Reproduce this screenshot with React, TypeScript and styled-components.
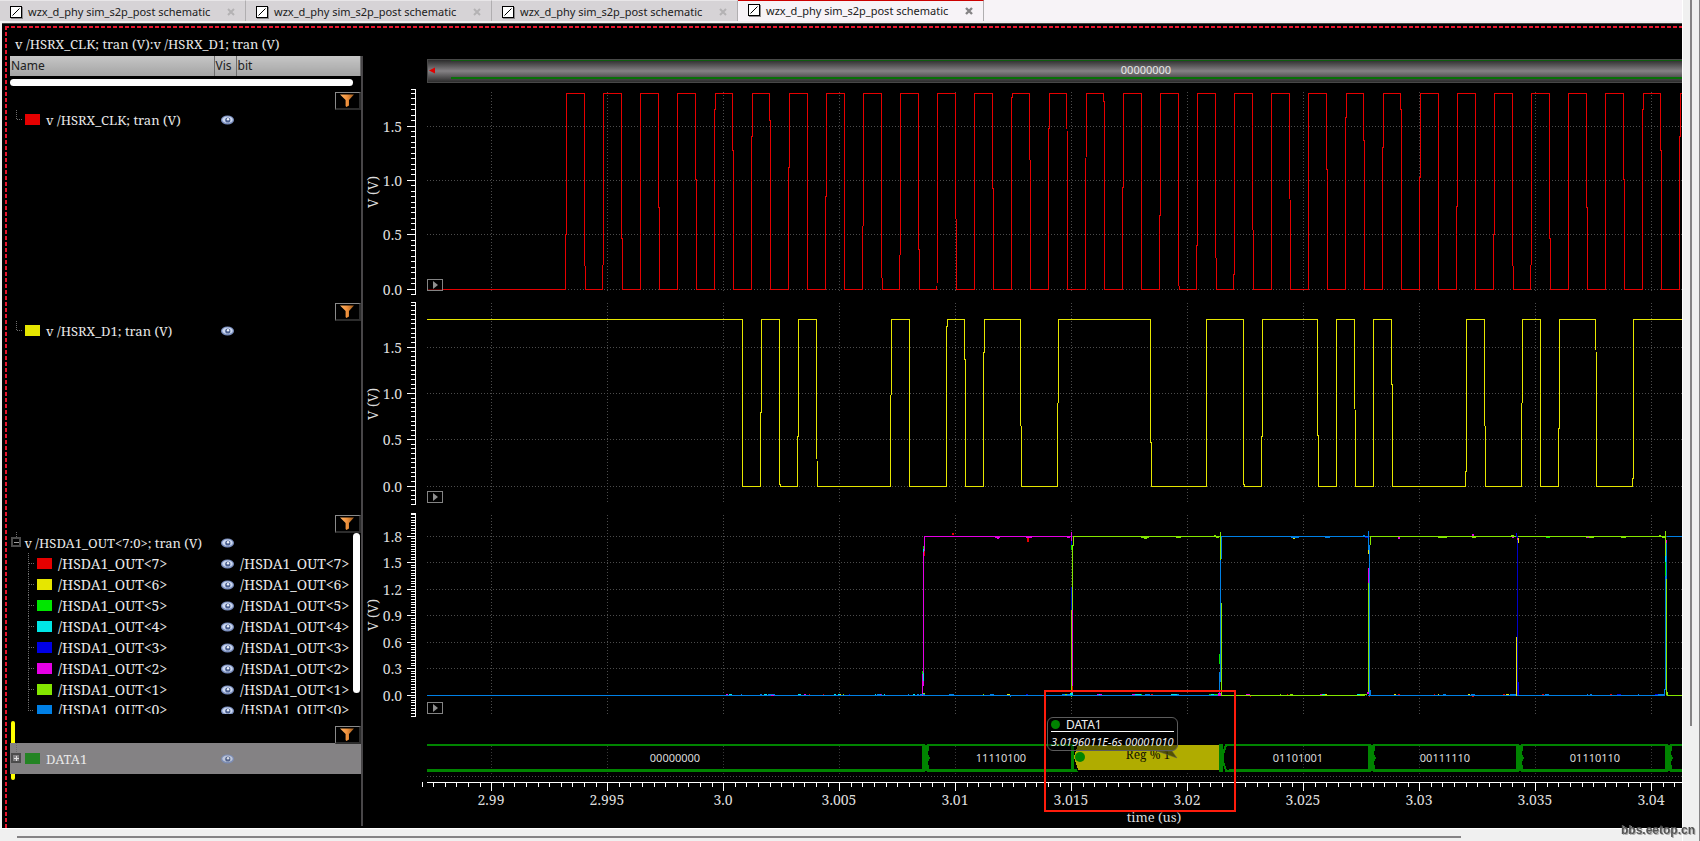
import React from "react";
import styled, { createGlobalStyle, css } from "styled-components";

const SERIF = '"Noto Serif", "Liberation Serif", serif';
const SANS = '"Noto Sans", "Open Sans", sans-serif';
const GUTTER = 64;
const PX_PER_5NS = 116;

const Global = createGlobalStyle`
  * { box-sizing: border-box; }
  body { margin: 0; background: #f0f0f0; }
  button { font: inherit; color: inherit; padding: 0; margin: 0; background: none; border: 0; }
`;

const Page = styled.div`
  display: grid;
  grid-template-columns: minmax(0, 1fr) 18px;
  min-height: 100vh;
  font-family: ${SANS};
  background: #f0f0f0;
`;

const Main = styled.div`
  display: flex;
  flex-direction: column;
  min-width: 0;
`;

const TabBar = styled.nav`
  display: flex;
  height: 21px;
  background: #f7f3f7;
`;

const Tab = styled.div<{ $active?: boolean }>`
  display: flex;
  align-items: center;
  width: 246px;
  padding: ${(p) => (p.$active ? "0 10px 1px 10px" : "2px 10px 0 10px")};
  border-top: 1px solid ${(p) => (p.$active ? "#cc0000" : "#e8e6e8")};
  border-right: 1px solid #b0aeb0;
  background: ${(p) => (p.$active ? "#f7f3f7" : "#d6d3d6")};
  svg { flex: none; }
`;

const TabLabel = styled.button`
  flex: 1;
  margin-left: 5px;
  text-align: left;
  white-space: nowrap;
  font-size: 11px;
  line-height: 16px;
  color: #202020;
`;

const IconButton = styled.button`
  display: flex;
`;

const Frame = styled.section`
  position: relative;
  flex: 1;
  display: flex;
  flex-direction: column;
  margin: 2px 0 0 2px;
  border-top: 1px solid #444;
  background: #000;
  color: #e8e8e8;
  padding: 6px 0 2px 8px;
  overflow: hidden;
  &::before {
    content: "";
    position: absolute;
    left: 3px;
    top: 2px;
    right: 0;
    height: 2px;
    background: repeating-linear-gradient(90deg, #e8142c 0 4px, transparent 4px 6px);
  }
  &::after {
    content: "";
    position: absolute;
    left: 3px;
    top: 2px;
    bottom: 0;
    width: 2px;
    background: repeating-linear-gradient(180deg, #e8142c 0 4px, transparent 4px 6px);
  }
`;

const Title = styled.h1`
  margin: 0;
  padding: 4px 5px 2px;
  font: 400 13px / 20px ${SERIF};
`;

const Body = styled.div`
  flex: 1;
  display: flex;
`;

const SignalPanel = styled.aside`
  flex: 0 0 353px;
  position: relative;
  border-right: 2px solid #484648;
`;

const SignalTable = styled.table`
  width: 351px;
  table-layout: fixed;
  border-collapse: collapse;
  font: 400 13px / 20px ${SERIF};
  td, th { padding: 0; }
`;

const HeadCell = styled.th`
  height: 20px;
  text-align: left;
  font: 400 12px / 19px ${SANS};
  color: #202020;
  background: linear-gradient(#c6c6c6, #a4a4a4);
  border-right: 1px solid #6c6c6c;
  text-indent: 1px;
  vertical-align: top;
`;

const HScroll = styled.div`
  width: 343px;
  height: 7px;
  margin: 3px 0 6px;
  border-radius: 4px;
  background: #fff;
`;

const VScroll = styled.div`
  position: absolute;
  right: 1px;
  top: 477px;
  width: 7px;
  height: 160px;
  border-radius: 4px;
  background: #fff;
`;

const FilterCell = styled.div`
  height: 17px;
  display: flex;
  align-items: flex-start;
  justify-content: flex-end;
`;

const FilterButton = styled.button`
  width: 26px;
  height: 18px;
  display: flex;
  align-items: center;
  justify-content: center;
  border: 1px solid #8a8a8a;
  border-right: 2px solid #2c2c2c;
  border-bottom: 2px solid #2c2c2c;
`;

const Spacer = styled.td<{ $h: number }>`
  height: ${(p) => p.$h}px;
`;

const Cell = styled.div<{ $h?: number; $selected?: boolean; $indent?: number; $bit?: boolean }>`
  display: flex;
  align-items: ${(p) => (p.$h && p.$h < 21 ? "flex-start" : "center")};
  height: ${(p) => p.$h ?? 21}px;
  padding-left: ${(p) => p.$indent ?? 0}px;
  font-size: ${(p) => (p.$bit ? 14 : 13)}px;
  overflow: hidden;
  white-space: nowrap;
  ${(p) => p.$selected && css`background: #848284;`}
`;

const Swatch = styled.i<{ $c: string; $nested?: boolean }>`
  flex: none;
  width: 15px;
  height: 11px;
  margin: 5px 6px 5px ${(p) => (p.$nested ? -7 : 3)}px;
  background: ${(p) => p.$c};
`;

const Cursor = styled.i`
  position: absolute;
  left: 1px;
  top: 665px;
  width: 4px;
  height: 59px;
  border-radius: 2px;
  background: #ffff00;
  z-index: 0;
`;

const Layer = styled.div`
  position: relative;
  z-index: 1;
`;

const ChartPanel = styled.div`
  position: relative;
  flex: 1;
  min-width: 0;
  display: flex;
  flex-direction: column;
`;

const Overview = styled.div`
  position: relative;
  display: flex;
  align-items: center;
  justify-content: center;
  height: 24px;
  margin: 3px 0 4px ${GUTTER}px;
  border: solid #484848;
  border-width: 1px 0 1px 1px;
  background: linear-gradient(#2c2c2c, #858285 50%, #2c2c2c);
  font-size: 11px;
  line-height: 16px;
  padding: 0 0 2px 182px;
  &::before {
    content: "";
    position: absolute;
    left: 23px;
    right: 0;
    top: 0;
    bottom: 3px;
    border-top: 1px solid #105c10;
    border-bottom: 2px solid #087008;
  }
`;

const OverviewValue = styled.span`
  flex: 1;
  text-align: center;
`;

const LeftArrow = styled.svg`
  position: absolute;
  left: 1px;
  top: 7px;
`;

const Strip = styled.div<{ $h: number }>`
  position: relative;
  height: ${(p) => p.$h}px;
`;

const Plot = styled.svg`
  display: block;
  width: 100%;
  height: 100%;
  text { fill: #dcdcdc; font-family: ${SERIF}; font-size: 14px; }
  text.bus { font-family: ${SANS}; font-size: 11px; }
  text.unit { font-size: 13px; }
  text.reg { fill: #141400; font-size: 12px; }
`;

const PlayButton = styled.button<{ $y: number }>`
  position: absolute;
  left: ${GUTTER}px;
  top: ${(p) => p.$y}px;
  width: 16px;
  height: 12px;
  display: flex;
  align-items: center;
  justify-content: center;
  border: 1px solid #848484;
  background: rgba(0, 0, 0, 0.6);
`;

const RegionBox = styled.div`
  position: absolute;
  left: 681px;
  top: 634px;
  width: 192px;
  height: 122px;
  border: 2px solid #ff1c0c;
`;

const Tooltip = styled.div`
  position: absolute;
  left: 684px;
  top: 661px;
  width: 131px;
  height: 34px;
  padding: 0 3px;
  border: 1px solid #5c5c5c;
  border-radius: 6px;
  background: rgba(0, 0, 0, 0.45);
  white-space: nowrap;
  color: #f0f0f0;
`;

const TipHead = styled.div`
  display: flex;
  align-items: center;
  gap: 6px;
  height: 14px;
  border-bottom: 1px solid #fff;
  font-size: 12px;
  line-height: 12px;
`;

const Dot = styled.i`
  width: 9px;
  height: 9px;
  border-radius: 50%;
  background: #008400;
`;

const TipValue = styled.div`
  padding-top: 2px;
  font-size: 11px;
  font-style: italic;
  line-height: 16px;
`;

const TipTail = styled.svg`
  position: absolute;
  right: -1px;
  top: 32px;
`;

const BottomBar = styled.div`
  height: 13px;
  border-top: 1px solid #fff;
  padding: 7px 221px 0 17px;
`;

const BottomThumb = styled.div`
  height: 2px;
  background: #858385;
`;

const RightBar = styled.div`
  border-left: 1px solid #fff;
  border-right: 1px solid #858385;
  padding-left: 7px;
`;

const RightThumb = styled.div`
  width: 2px;
  height: 726px;
  background: #858385;
`;

const Watermark = styled.div`
  position: fixed;
  right: 5px;
  bottom: 3px;
  font: 700 12px / 16px "Liberation Sans", sans-serif;
  color: #555;
  text-shadow: 1px 1px 0 #aaa;
`;

const TabIcon = () => (
  <svg width="13" height="13" shapeRendering="crispEdges">
    <rect x="1" y="1" width="12" height="12" fill="#8c8a8c" />
    <rect x="0" y="0" width="12" height="12" fill="#000" />
    <rect x="1" y="1" width="10" height="10" fill="#fff" />
    <path d="M2.5 9.5 L9.5 2.5" stroke="#000" shapeRendering="auto" />
  </svg>
);

const CloseIcon = ({ dark }: { dark?: boolean }) => (
  <svg width="8" height="8">
    <path d="M1 1 L7 7 M7 1 L1 7" stroke={dark ? "#858385" : "#b4b2b4"} strokeWidth={dark ? 2.4 : 2} />
  </svg>
);

const Funnel = () => (
  <svg width="14" height="13">
    <defs>
      <linearGradient id="funnel" x1="0" x2="1">
        <stop offset="0" stopColor="#ffb468" />
        <stop offset="0.5" stopColor="#f0913c" />
        <stop offset="1" stopColor="#9c5a1c" />
      </linearGradient>
    </defs>
    <path d="M0 0.5 H14 L9 6 V11.5 L6.4 13 L5.6 12 V6 Z" fill="url(#funnel)" />
  </svg>
);

const Eye = ({ dim }: { dim?: boolean }) => (
  <svg width="13" height="10" opacity={dim ? 0.8 : 1}>
    <ellipse cx="6.5" cy="5" rx="6.5" ry="4.6" fill="#7c90c0" />
    <ellipse cx="6.5" cy="4.8" rx="5.2" ry="3.2" fill="#ccd8f0" />
    <circle cx="6.8" cy="5" r="2.6" fill="#485c8c" />
    <circle cx="7" cy="4.2" r="1.2" fill="#eef2fa" />
  </svg>
);

const MarkSvg = styled.svg`
  flex: none;
`;

const TreeMark = ({ kind, h = 21 }: { kind: "leaf" | "open" | "closed" | "child" | "last"; h?: number }) => {
  const w = kind === "child" || kind === "last" ? 34 : kind === "open" ? 11 : 12;
  const mid = kind === "last" ? 10 : Math.floor(h / 2);
  return (
    <MarkSvg width={w} height={h} shapeRendering="crispEdges">
      {kind === "leaf" && <path d="M6.5 1 V10.5 H12" fill="none" stroke="#6c6c6c" strokeDasharray="1 1" />}
      {kind === "child" && <path d={`M18.5 0 V${h} M18.5 10.5 H24`} fill="none" stroke="#6c6c6c" strokeDasharray="1 1" />}
      {kind === "last" && <path d="M18.5 0 V10.5 H24" fill="none" stroke="#6c6c6c" strokeDasharray="1 1" />}
      {(kind === "open" || kind === "closed") && (
        <>
          <path d={`M6.5 0 V${mid - 5}`} stroke="#6c6c6c" strokeDasharray="1 1" />
          <rect x="2" y={mid - 4} width="8" height="8" fill={kind === "open" ? "#000" : "#848284"} stroke="#4c4c4c" strokeWidth="2" />
          <path
            d={kind === "open" ? `M4 ${mid + 0.5} H9` : `M4 ${mid + 0.5} H9 M6.5 ${mid - 2} V${mid + 3}`}
            stroke={kind === "open" ? "#a0a0a0" : "#e0e0e0"}
          />
        </>
      )}
    </MarkSvg>
  );
};

const FilterRow = () => (
  <tr>
    <td colSpan={3}>
      <FilterCell>
        <FilterButton aria-label="Filter"><Funnel /></FilterButton>
      </FilterCell>
    </td>
  </tr>
);

const EyeButton = styled(IconButton)<{ $cut?: boolean }>`
  padding-top: ${(p) => (p.$cut ? 6 : 0)}px;
`;

const Visibility = ({ h, dim }: { h?: number; dim?: boolean }) => (
  <Cell $h={h} $indent={7} $selected={dim}>
    <EyeButton aria-label="Toggle visibility" $cut={!!h && h < 21}>
      <Eye dim={dim} />
    </EyeButton>
  </Cell>
);

const single = [
  { name: "v /HSRX_CLK; tran (V)", color: "#e60000", gap: 173 },
  { name: "v /HSRX_D1; tran (V)", color: "#e6e600", gap: 174 },
];

const bits = [
  ["7", "#e60000"], ["6", "#e6e600"], ["5", "#00e600"], ["4", "#00e6e6"],
  ["3", "#0000e6"], ["2", "#e600e6"], ["1", "#84e600"], ["0", "#0080e6"],
];

const NameCol = styled.col`width: 204px;`;
const VisCol = styled.col`width: 22px;`;

const Signals = () => (
  <SignalPanel>
    <Cursor />
    <Layer>
      <SignalTable>
        <colgroup>
          <NameCol />
          <VisCol />
          <col />
        </colgroup>
        <thead>
          <tr><HeadCell>Name</HeadCell><HeadCell>Vis</HeadCell><HeadCell>bit</HeadCell></tr>
        </thead>
        <tbody>
          <tr><td colSpan={3}><HScroll /></td></tr>
        </tbody>
        {single.map((s) => (
          <tbody key={s.name}>
            <FilterRow />
            <tr>
              <td><Cell><TreeMark kind="leaf" /><Swatch $c={s.color} />{s.name}</Cell></td>
              <td><Visibility /></td>
              <td />
            </tr>
            <tr><Spacer colSpan={3} $h={s.gap} /></tr>
          </tbody>
        ))}
        <tbody>
          <FilterRow />
          <tr>
            <td><Cell><TreeMark kind="open" />&nbsp;v /HSDA1_OUT&lt;7:0&gt;; tran (V)</Cell></td>
            <td><Visibility /></td>
            <td />
          </tr>
          {bits.map(([n, c]) => {
            const h = n === "0" ? 14 : 21;
            return (
              <tr key={n}>
                <td>
                  <Cell $h={h} $bit>
                    <TreeMark kind={n === "0" ? "last" : "child"} h={h} />
                    <Swatch $c={c} $nested />
                    /HSDA1_OUT&lt;{n}&gt;
                  </Cell>
                </td>
                <td><Visibility h={h} /></td>
                <td><Cell $h={h} $indent={4} $bit>/HSDA1_OUT&lt;{n}&gt;</Cell></td>
              </tr>
            );
          })}
          <tr><Spacer colSpan={3} $h={12} /></tr>
        </tbody>
        <tbody>
          <FilterRow />
          <tr>
            <td><Cell $h={31} $selected><TreeMark kind="closed" h={31} /><Swatch $c="#248424" />DATA1</Cell></td>
            <td><Visibility h={31} dim /></td>
            <td><Cell $h={31} $selected /></td>
          </tr>
        </tbody>
      </SignalTable>
    </Layer>
    <VScroll />
  </SignalPanel>
);

type AxisSpec = {
  zero: number;
  perVolt: number;
  top: number;
  bottom: number;
  gridTop: number;
  gridBottom: number;
  labels: number[];
  minor: number;
  titleY: number;
};

const GRID = "#4c4c4c";
const range = (n: number) => Array.from({ length: n }, (_, i) => i);
const tickX = (i: number) => 64 + PX_PER_5NS * i;

const AxisAndGrid = ({ a }: { a: AxisSpec }) => {
  const y = (v: number) => Math.floor(a.zero - v * a.perVolt);
  const ticks = range(90).map((i) => y((i - 20) * a.minor)).filter((t) => t > a.top && t < a.bottom);
  return (
    <g shapeRendering="crispEdges">
      <path d={`M52.5 ${a.top} V${a.bottom + 1}`} stroke="#fff" />
      {[a.top, a.bottom, ...ticks].map((t, i) => (
        <path key={i} d={`M48 ${t + 0.5} H52`} stroke="#fff" />
      ))}
      {a.labels.map((v) => (
        <g key={v}>
          <path d={`M44 ${y(v) + 0.5} H52`} stroke="#fff" />
          <text x="39" y={y(v) + 6} textAnchor="end">{v.toFixed(1)}</text>
          <line x1={GUTTER} x2="100%" y1={y(v) + 0.5} y2={y(v) + 0.5} stroke={GRID} strokeDasharray="1 2" />
        </g>
      ))}
      {range(11).map((i) => (
        <path
          key={i}
          d={`M${GUTTER + tickX(i) + 0.5} ${a.gridTop} V${a.gridBottom}`}
          stroke={GRID}
          strokeDasharray="1 2"
        />
      ))}
      <text transform={`translate(15 ${a.titleY}) rotate(-90)`} textAnchor="middle">V (V)</text>
    </g>
  );
};

const Play = ({ y }: { y: number }) => (
  <PlayButton $y={y} aria-label="Play">
    <svg width="6" height="8"><path d="M1 0 L6 4 L1 8 Z" fill="#909090" /></svg>
  </PlayButton>
);

/* Clock: 1.6 ns period, 0.8 ns high */
const clockPath = (hi: number, lo: number) =>
  `M0 ${lo} ` +
  range(31)
    .map((k) => {
      const o = k * 37.12;
      return `L${138.8 + o} ${lo} L${139.6 + o} ${hi} L${157.3 + o} ${hi} L${158.1 + o} ${lo}`;
    })
    .join(" ");

/* Bit positions, counted from the first edge, at which the data line toggles */
const toggles = [0, 1, 2, 3, 4, 8, 9, 11, 12, 13, 15, 17, 22, 25, 27, 28, 31, 32, 33, 34, 35, 39, 40, 42, 43, 44, 46, 48];
const dataPath = (hi: number, lo: number) => {
  let level = hi;
  let d = `M0 ${hi}`;
  toggles.forEach((t) => {
    const x = 315.1 + t * 18.56;
    const next = level === hi ? lo : hi;
    d += ` L${x} ${level} L${x + 0.8} ${next}`;
    level = next;
  });
  return `${d} H3000`;
};

const axis1: AxisSpec = { zero: 202, perVolt: 108.6, top: 2, bottom: 207, gridTop: 5, gridBottom: 204, labels: [1.5, 1, 0.5, 0], minor: 0.05, titleY: 105 };
const axis2: AxisSpec = { zero: 186, perVolt: 92.6, top: 2, bottom: 204, gridTop: 3, gridBottom: 202, labels: [1.5, 1, 0.5, 0], minor: 0.05, titleY: 104 };
const axis3: AxisSpec = { zero: 183, perVolt: 88.3, top: 1, bottom: 204, gridTop: 3, gridBottom: 202, labels: [1.8, 1.5, 1.2, 0.9, 0.6, 0.3, 0], minor: 0.03, titleY: 103 };

const RED = "#e60000", YEL = "#e6e600", GRN = "#00e600", CYA = "#00e6e6", NAVY = "#0000e6", MAG = "#e600e6", LIME = "#84e600", BLUE = "#0080e6";

/* Output bus levels and edges: x, y, width, height, colour */
const segments: [number, number, number, number, string][] = [
  [0, 183, 792, 1, BLUE], [794, 183, 144, 1, LIME], [941, 183, 297, 1, BLUE], [1240, 183, 2000, 1, LIME],
  [497, 24, 147, 1, MAG], [647, 24, 146, 1, LIME], [794, 24, 147, 1, BLUE], [943, 24, 295, 1, LIME], [1240, 24, 2000, 1, BLUE],
  [497, 24, 1, 15, MAG], [496, 39, 1, 135, MAG], [495, 162, 1, 22, MAG], [496, 34, 1, 3, GRN], [496, 37, 1, 3, CYA], [497, 39, 1, 5, RED], [495, 159, 1, 3, GRN], [496, 161, 1, 8, CYA],
  [644, 20, 1, 10, MAG], [646, 24, 1, 10, LIME], [645, 33, 1, 66, LIME], [644, 75, 1, 23, NAVY], [644, 98, 1, 85, LIME], [645, 98, 1, 85, MAG], [644, 29, 1, 4, NAVY], [644, 33, 1, 5, GRN], [645, 174, 1, 6, RED],
  [793, 20, 1, 28, LIME], [794, 25, 1, 22, BLUE], [793, 48, 1, 122, BLUE], [792, 160, 1, 24, BLUE], [792, 142, 1, 10, GRN], [794, 91, 1, 92, LIME],
  [941, 19, 1, 19, BLUE], [943, 24, 1, 9, LIME], [942, 33, 1, 150, BLUE], [941, 38, 1, 4, YEL], [941, 56, 1, 15, MAG], [941, 71, 1, 111, LIME], [943, 178, 1, 5, BLUE],
  [1090, 24, 1, 159, "#0000c8"], [1089, 21, 1, 4, NAVY], [1091, 170, 1, 13, NAVY], [1089, 125, 1, 59, YEL], [1091, 26, 1, 5, YEL], [1090, 26, 1, 2, MAG],
  [1238, 19, 1, 25, LIME], [1239, 30, 1, 37, BLUE], [1238, 44, 1, 7, CYA], [1238, 50, 1, 14, GRN], [1238, 64, 1, 114, BLUE], [1239, 67, 1, 116, LIME], [1239, 28, 1, 3, MAG], [1237, 177, 1, 7, BLUE], [1240, 180, 1, 3, LIME],
];

/* Small coupling glitches riding on both levels */
const glitches: [number, number, number, number, string][] = [
  [525, 21, 2, 2, RED], [568, 25, 5, 1, MAG], [570, 26, 2, 1, MAG], [600, 26, 2, 4, RED], [599, 25, 6, 1, MAG], [640, 25, 3, 1, MAG],
  [714, 25, 8, 1, LIME], [717, 26, 3, 1, LIME], [749, 25, 5, 1, LIME], [787, 23, 2, 1, LIME], [789, 25, 3, 1, LIME],
  [864, 25, 8, 1, BLUE], [866, 26, 2, 1, YEL], [898, 25, 5, 1, BLUE], [936, 23, 2, 1, BLUE], [938, 25, 3, 1, NAVY],
  [971, 25, 2, 2, MAG], [1011, 25, 9, 1, LIME], [1045, 22, 2, 2, MAG], [1045, 25, 4, 1, LIME], [1084, 23, 3, 1, LIME], [1085, 25, 2, 1, MAG],
  [1119, 25, 4, 1, GRN], [1159, 25, 8, 1, LIME], [1160, 25, 2, 1, MAG], [1194, 25, 5, 1, LIME], [1232, 23, 2, 1, LIME], [1235, 25, 3, 1, LIME],
  [299, 182, 2, 1, MAG], [302, 182, 3, 1, CYA], [314, 182, 1, 1, BLUE], [333, 182, 2, 1, BLUE], [337, 182, 3, 1, CYA], [341, 182, 7, 1, BLUE], [344, 183, 3, 1, MAG],
  [371, 182, 3, 1, CYA], [377, 182, 2, 1, MAG], [382, 182, 1, 1, RED], [396, 182, 1, 1, RED], [407, 182, 2, 1, CYA], [411, 182, 3, 1, CYA], [413, 182, 1, 1, YEL], [416, 182, 1, 1, LIME], [422, 182, 1, 1, NAVY],
  [448, 182, 1, 1, CYA], [450, 182, 5, 1, BLUE], [453, 182, 1, 1, MAG], [457, 182, 1, 1, CYA], [481, 182, 1, 1, BLUE], [486, 182, 2, 1, CYA], [490, 182, 2, 1, BLUE], [493, 182, 5, 1, BLUE], [496, 181, 2, 1, LIME],
  [522, 182, 5, 1, BLUE], [556, 182, 1, 1, LIME], [563, 182, 4, 1, BLUE], [580, 182, 3, 1, YEL], [583, 184, 1, 1, BLUE], [599, 182, 2, 1, NAVY], [635, 182, 10, 1, BLUE], [638, 182, 2, 1, LIME], [643, 181, 3, 2, CYA], [644, 184, 1, 1, LIME],
  [670, 182, 5, 1, MAG], [672, 182, 1, 1, CYA], [705, 182, 3, 1, MAG], [708, 182, 6, 1, CYA], [714, 182, 1, 1, GRN], [718, 182, 5, 1, BLUE], [724, 182, 2, 1, RED], [744, 182, 7, 1, CYA], [750, 182, 2, 1, BLUE], [782, 182, 9, 1, GRN], [784, 182, 3, 1, CYA], [791, 181, 3, 3, MAG],
  [819, 182, 4, 1, MAG], [823, 184, 1, 1, RED], [853, 182, 1, 1, LIME], [860, 182, 1, 1, RED], [863, 182, 3, 1, LIME], [893, 182, 2, 1, MAG], [895, 182, 3, 1, CYA], [898, 182, 2, 1, YEL], [930, 182, 3, 1, CYA], [933, 182, 7, 1, LIME], [940, 180, 2, 2, MAG], [942, 184, 1, 1, RED],
  [967, 182, 2, 1, YEL], [971, 182, 2, 1, RED], [1007, 182, 1, 1, RED], [1011, 182, 1, 1, YEL], [1016, 182, 3, 1, BLUE], [1041, 182, 2, 1, YEL], [1044, 182, 4, 1, BLUE], [1045, 184, 2, 1, RED], [1076, 182, 2, 1, RED], [1079, 182, 3, 1, YEL], [1083, 182, 6, 1, BLUE],
  [1115, 182, 2, 1, RED], [1118, 182, 4, 1, BLUE], [1160, 182, 1, 1, BLUE], [1163, 182, 2, 1, BLUE], [1183, 182, 2, 1, RED], [1190, 182, 4, 1, NAVY], [1211, 182, 1, 1, BLUE], [1228, 182, 3, 1, NAVY], [1231, 182, 7, 1, BLUE],
];

const BUS = "#008400";

/* Word change: a solid block, with the rounded start of the next word beside it */
const BusEdge = ({ x }: { x: number }) => (
  <g>
    <rect x={x} y="20" width="6" height="28" fill={BUS} />
    <path d={`M${x + 4} 20 h4 l-1 5 l-1 4 v1 l2 4 l-2 4 l1 5 l1 4 h-4 Z`} fill={BUS} />
    <path d={`M${x + 3} 20.5 h2 M${x + 3} 47.5 h2`} stroke="#000" />
  </g>
);

/* Word change after the highlighted word: the next word's start stays open */
const OpenBusEdge = ({ x }: { x: number }) => (
  <g>
    <rect x={x} y="20" width="4" height="28" fill={BUS} />
    <path d={`M${x + 4} 20 h6 v28 h-6 Z`} fill="#000" />
    <path d={`M${x + 10} 21 H${x + 7} L${x + 4} 30 V38 L${x + 7} 46.5 H${x + 10}`} fill="none" stroke={BUS} strokeWidth="2" />
  </g>
);

const busWords: [number, string][] = [
  [248, "00000000"], [574, "11110100"], [871, "01101001"], [1018, "00111110"], [1168, "01110110"],
];

const BusStrip = () => (
  <Strip $h={102}>
    <Plot>
      <g shapeRendering="crispEdges">
        {range(11).map((i) => (
          <path key={i} d={`M${GUTTER + tickX(i) + 0.5} 22 V52`} stroke="#383838" strokeDasharray="1 2" />
        ))}
        <line x1={GUTTER} x2="100%" y1="52.5" y2="52.5" stroke={GRID} strokeDasharray="1 2" />
        <line x1={GUTTER} x2="100%" y1="21" y2="21" stroke={BUS} strokeWidth="2" />
        <line x1={GUTTER} x2="100%" y1="46.5" y2="46.5" stroke={BUS} strokeWidth="3" />
        <g transform={`translate(${GUTTER} 0)`}>
          <path d="M644 20 h3 v28 h-3 Z" fill={BUS} />
          <path d="M647 20 H793 V48 H651 L647 40 Z" fill="#000" />
          <path d="M651 21 H792 V46 H651 L647 33 Z" fill="#b0ac00" />
          {[495, 941, 1089, 1238].map((x) => <BusEdge key={x} x={x} />)}
          <OpenBusEdge x={792} />
        </g>
        <line x1={GUTTER} x2="100%" y1="58.5" y2="58.5" stroke="#fff" />
        {range(110).map((i) => {
          const x = GUTTER - 5 + Math.floor(i * 11.6);
          return i % 10 === 6 ? null : <path key={i} d={`M${x + 0.5} 58 V63`} stroke="#fff" />;
        })}
        {range(11).map((i) => (
          <path key={i} d={`M${GUTTER + tickX(i) + 0.5} 59 V67`} stroke="#fff" />
        ))}
      </g>
      <g transform={`translate(${GUTTER} 0)`}>
        <circle cx="653" cy="33" r="5" fill={BUS} />
        <text className="reg" x="721" y="35" textAnchor="middle">Reg % 1</text>
        {busWords.map(([x, w]) => <text className="bus" key={w} x={x} y="38" textAnchor="middle">{w}</text>)}
        {range(11).map((i) => (
          <text key={i} x={tickX(i)} y="81" textAnchor="middle">
            {i === 2 ? "3.0" : String(Number((2.99 + i * 0.005).toFixed(3)))}
          </text>
        ))}
        <text className="unit" x="727" y="98" textAnchor="middle">time (us)</text>
      </g>
    </Plot>
  </Strip>
);

const Charts = () => (
  <ChartPanel>
    <Overview>
      <LeftArrow width="7" height="7"><path d="M0 3.5 L6 0.5 V6.5 Z" fill="#e00000" /></LeftArrow>
      <OverviewValue>00000000</OverviewValue>
    </Overview>
    <Strip $h={213}>
      <Plot>
        <AxisAndGrid a={axis1} />
        <g transform={`translate(${GUTTER} 0)`}>
          <path d={clockPath(6.5, 202.5)} fill="none" stroke={RED} shapeRendering="crispEdges" />
        </g>
      </Plot>
      <Play y={192} />
    </Strip>
    <Strip $h={212}>
      <Plot>
        <AxisAndGrid a={axis2} />
        <g transform={`translate(${GUTTER} 0)`}>
          <path d={dataPath(19.5, 186.5)} fill="none" stroke={YEL} shapeRendering="crispEdges" />
        </g>
      </Plot>
      <Play y={191} />
    </Strip>
    <Strip $h={212}>
      <Plot>
        <AxisAndGrid a={axis3} />
        <g transform={`translate(${GUTTER} 0)`} shapeRendering="crispEdges">
          {[...segments, ...glitches].map(([x, y, w, h, c], i) => (
            <rect key={i} x={x} y={y} width={w} height={h} fill={c} />
          ))}
        </g>
      </Plot>
      <Play y={190} />
    </Strip>
    <BusStrip />
    <Tooltip role="tooltip">
      <TipHead><Dot />DATA1</TipHead>
      <TipValue>3.0196011E-6s 00001010</TipValue>
      <TipTail width="21" height="9"><path d="M0 1 H15 L20 8 Z" fill="rgba(60,60,0,0.8)" stroke="#5c5c5c" strokeWidth="0.5" /></TipTail>
    </Tooltip>
    <RegionBox />
  </ChartPanel>
);

export default function App() {
  return (
    <Page>
      <Global />
      <Main>
        <TabBar>
          {[0, 1, 2, 3].map((i) => (
            <Tab key={i} $active={i === 3}>
              <TabIcon />
              <TabLabel>wzx_d_phy sim_s2p_post schematic</TabLabel>
              <IconButton aria-label="Close tab"><CloseIcon dark={i === 3} /></IconButton>
            </Tab>
          ))}
        </TabBar>
        <Frame>
          <Title>v /HSRX_CLK; tran (V):v /HSRX_D1; tran (V)</Title>
          <Body>
            <Signals />
            <Charts />
          </Body>
        </Frame>
        <BottomBar><BottomThumb /></BottomBar>
      </Main>
      <RightBar><RightThumb /></RightBar>
      <Watermark>bbs.eetop.cn</Watermark>
    </Page>
  );
}
